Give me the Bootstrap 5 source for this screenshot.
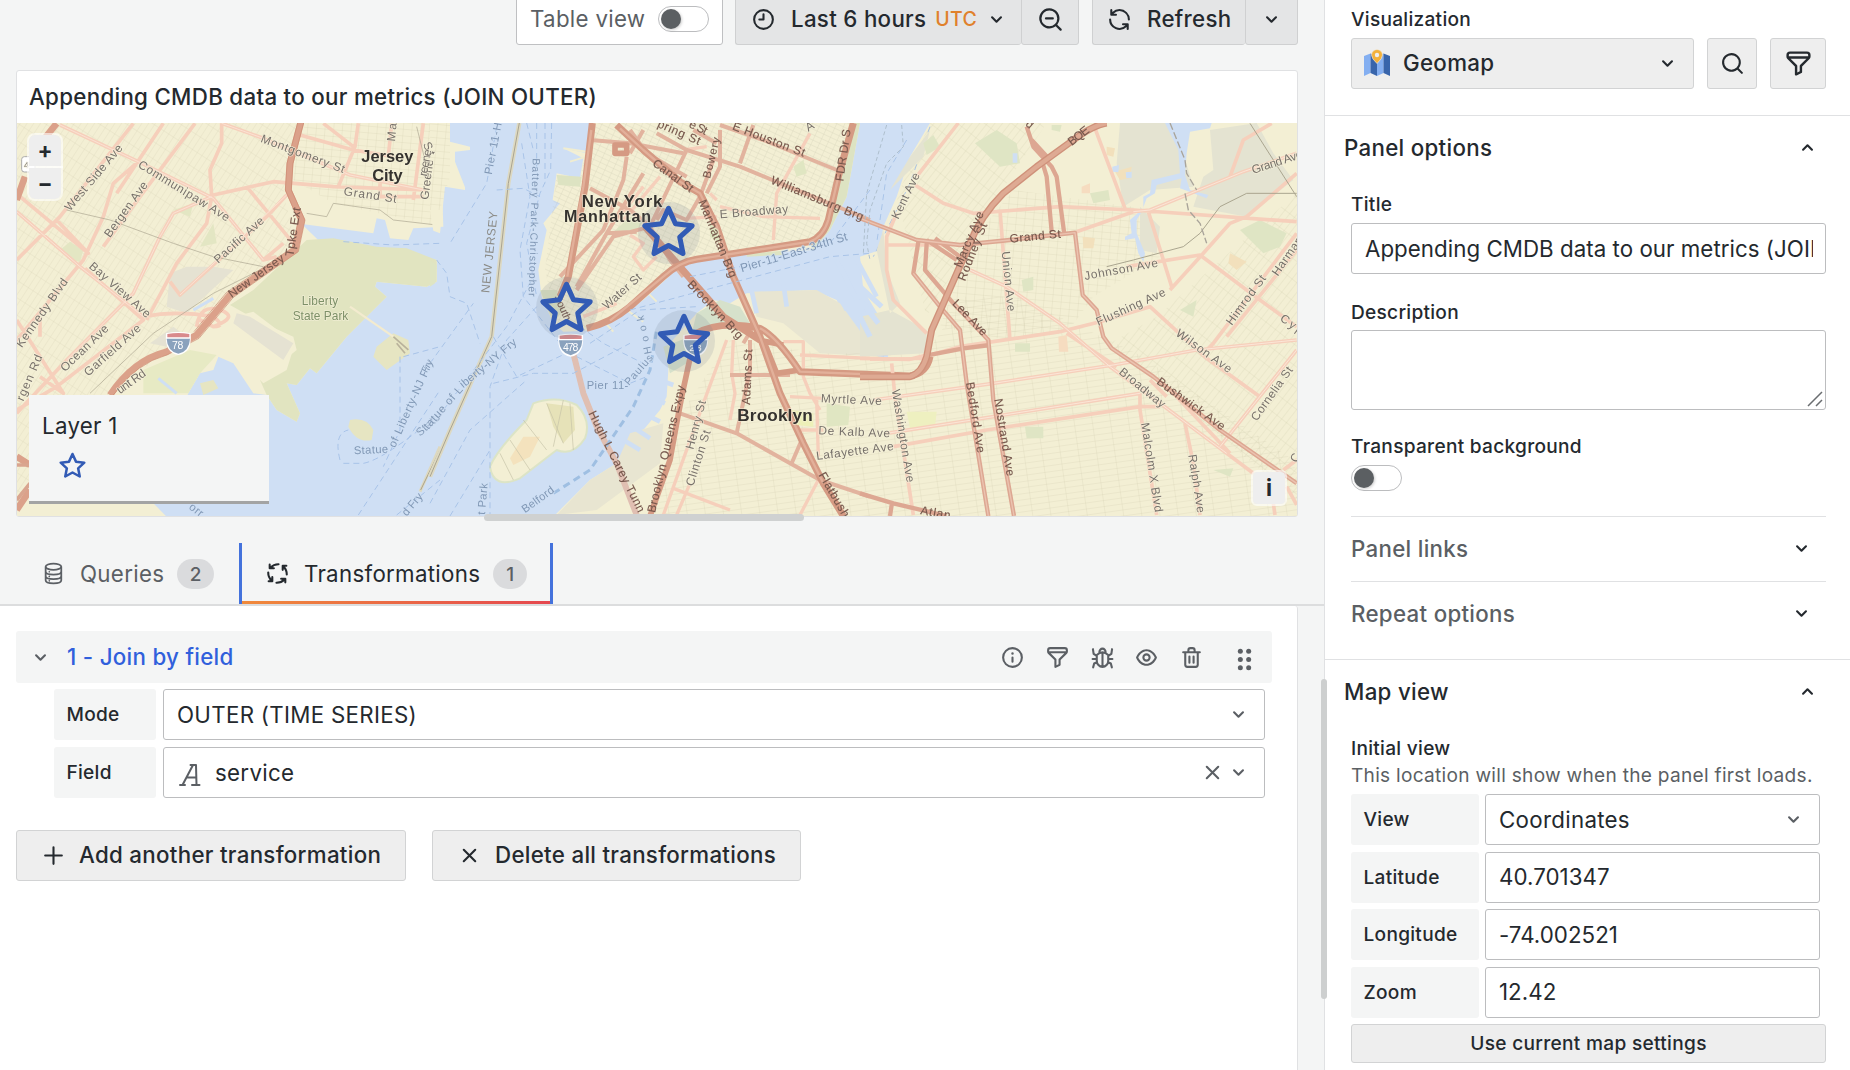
<!DOCTYPE html>
<html lang="en">
<head>
<meta charset="utf-8">
<meta name="viewport" content="width=device-width, initial-scale=1">
<title>Edit panel</title>
<link href="https://cdn.jsdelivr.net/npm/bootstrap@5.3.0/dist/css/bootstrap.min.css" rel="stylesheet">
<style>
:root{--ink:#24292e;--ink2:#5b5f64;--canvas:#f4f5f5;--line:#e0e1e3;--field:#bcbdbf}
body{font-family:Inter,"Liberation Sans",sans-serif;font-size:22.3px;letter-spacing:.3px;line-height:28px;color:var(--ink);background:var(--canvas);height:1070px;overflow:hidden}
.ico{width:25px;height:25px;fill:currentColor;flex:none}
.ln{fill:none;stroke:currentColor;stroke-width:2;stroke-linecap:round;stroke-linejoin:round}
.main-col{width:1324px}
.side-col{width:526px;background:#fff;border-left:1px solid var(--line)}
.top-tools{height:45px;padding-right:26px}
.tool{height:51px;padding-bottom:1px;background:#e4e5e6;border:1px solid #cfd0d1;border-radius:0 0 3px 3px;font-weight:500;white-space:nowrap}
.tool.plain{background:#fff;border-color:#bfc0c2;color:var(--ink2);font-weight:400}
.tog{width:51px;height:26px;border:1px solid var(--field);border-radius:13px;background:#fff;padding:2px}
.tog::before{content:"";display:block;width:20px;height:20px;border-radius:50%;background:#5b5f62;box-shadow:1px 1px 3px #0003}
.viz{width:1282px;height:447px;margin:25px 0 0 16px;background:#fff;border:1px solid var(--line);border-radius:3px}
.viz-title{height:52px;padding:0 12px 1px;font-weight:500}
.map-box{height:393px}
.map-box>svg.geo{display:block;width:1280px;height:393px}
.map-btn{width:32px;height:31px;background:#eee;outline:2px solid #fff9;font-weight:700;line-height:31px;letter-spacing:0}
.zoomers{left:12px;top:12px;gap:2px}
.zoomers .map-btn{line-height:29px}
.info-b{right:12px;bottom:12px;height:32px;border-radius:4px}
.legend{left:12px;top:272px;width:240px;height:109px;background:var(--canvas);border-bottom:3px solid #a3a4a4;padding:17px 13px}
.grip{left:484px;top:514px;width:320px;height:7px;border-radius:4px;background:#cfd1d1}
.tabs-row{height:63px;margin-top:26px;border-bottom:2px solid #dcddde}
.tab-i{color:var(--ink2);height:61px}
.tab-on{width:314px;color:var(--ink);border:solid #4472dc;border-width:0 3px;background:linear-gradient(90deg,#f08a3c,#e5484f) bottom/100% 3px no-repeat}
.cnt{background:#dadbdd;color:var(--ink2);border-radius:15px;height:30px;font-size:19px;font-weight:500;line-height:31px;text-align:center}
.work{background:#fff;width:1298px;height:464px;border-right:1px solid var(--line);padding:25px 25px 0 16px;border-radius:0 3px 0 0}
.step-h{height:52px;background:var(--canvas);border-radius:3px}
.step-h b{font-weight:500;color:#3060dc}
.tag{background:var(--canvas);border-radius:3px;height:51px;font-size:19.1px;letter-spacing:.28px;font-weight:500;padding:0 12.500px 1px;line-height:24px}
.fld{height:51px;border:1px solid var(--field);border-radius:3px;background:#fff;padding:0 13px}
.typed{letter-spacing:.04px}
.gbtn{height:51px;border:1px solid #d2d3d4;background:#eee;border-radius:3px;font-weight:500;color:var(--ink);padding-bottom:1px}
.lab{font-size:19.1px;font-weight:500;line-height:24.5px;letter-spacing:.28px;height:24px}
.pad{padding:0 24px 0 26px}
.sect{border-top:1px solid var(--line)}
.sect-h{height:65px;padding:0 30px 2px 19px;font-weight:500}
.sub-h{height:65px;border-top:1px solid var(--line);color:var(--ink2);font-weight:500;padding-right:12px;padding-bottom:1px}
.sub-h .ico{color:var(--ink)}
.rowg{margin-bottom:6.6px;padding-right:6px;gap:6px}
.scr{left:1321px;top:679px;width:6px;height:320px;border-radius:3px;background:#cdcfcf}
.geo text{font-family:"Liberation Sans",Arial,sans-serif;letter-spacing:0}
</style>
<script src="https://cdn.jsdelivr.net/npm/bootstrap@5.3.0/dist/js/bootstrap.bundle.min.js"></script>
</head>
<body class="d-flex position-relative">
<svg width="0" height="0" class="position-absolute">
<symbol id="down" viewBox="0 0 24 24"><path d="M17,9.17a1,1,0,0,0-1.41,0L12,12.71,8.46,9.17a1,1,0,0,0-1.41,0,1,1,0,0,0,0,1.42l4.24,4.24a1,1,0,0,0,1.42,0L17,10.59A1,1,0,0,0,17,9.17Z"/></symbol>
<symbol id="up" viewBox="0 0 24 24"><path d="M17,13.41,12.71,9.17a1,1,0,0,0-1.42,0L7.05,13.41a1,1,0,0,0,0,1.42,1,1,0,0,0,1.41,0L12,11.29l3.54,3.54a1,1,0,0,0,.7.29,1,1,0,0,0,.71-.29A1,1,0,0,0,17,13.41Z"/></symbol>
<symbol id="clock" viewBox="0 0 24 24"><path d="M12,2A10,10,0,1,0,22,12,10,10,0,0,0,12,2Zm0,18a8,8,0,1,1,8-8A8,8,0,0,1,12,20ZM12,6a1,1,0,0,0-1,1v4H8a1,1,0,0,0,0,2h4a1,1,0,0,0,1-1V7A1,1,0,0,0,12,6Z"/></symbol>
<symbol id="search" viewBox="0 0 24 24"><path d="M21.71,20.29,18,16.61A9,9,0,1,0,16.61,18l3.68,3.68a1,1,0,0,0,1.42,0A1,1,0,0,0,21.71,20.29ZM11,18a7,7,0,1,1,7-7A7,7,0,0,1,11,18Z"/></symbol>
<symbol id="minus" viewBox="0 0 24 24"><use href="#search"/><path d="M8,10h6a1,1,0,0,1,0,2H8a1,1,0,0,1,0-2Z"/></symbol>
<symbol id="sync" viewBox="0 0 24 24"><path d="M19.91,15.51H15.38a1,1,0,0,0,0,2h2.4A8,8,0,0,1,4,12a1,1,0,1,0-2,0,10,10,0,0,0,16.88,7.23V21a1,1,0,0,0,2,0V16.5A1,1,0,0,0,19.91,15.51ZM12,2A10,10,0,0,0,5.12,4.77V3a1,1,0,0,0-2,0V7.5a1,1,0,0,0,1,1h4.5a1,1,0,0,0,0-2H6.22A8,8,0,0,1,20,12a1,1,0,0,0,2,0A10,10,0,0,0,12,2Z"/></symbol>
<symbol id="filter" viewBox="0 0 24 24"><path d="M19,2H5A3,3,0,0,0,2,5V6.17a3,3,0,0,0,.25,1.2l0,.06a2.81,2.81,0,0,0,.59.86L9,14.41V21a1,1,0,0,0,.47.85A1,1,0,0,0,10,22a1,1,0,0,0,.45-.11l4-2A1,1,0,0,0,15,19V14.41l6.12-6.12a2.81,2.81,0,0,0,.59-.86l0-.06A3,3,0,0,0,22,6.17V5A3,3,0,0,0,19,2ZM13.29,13.29A1,1,0,0,0,13,14v4.38l-2,1V14a1,1,0,0,0-.29-.71L5.41,8H18.59ZM20,6H4V5A1,1,0,0,1,5,4H19a1,1,0,0,1,1,1Z"/></symbol>
<symbol id="info" viewBox="0 0 24 24"><path d="M12,2A10,10,0,1,0,22,12,10,10,0,0,0,12,2Zm0,18a8,8,0,1,1,8-8A8,8,0,0,1,12,20Zm0-9a1,1,0,0,0-1,1v4a1,1,0,0,0,2,0V12A1,1,0,0,0,12,11Zm0-4a1.2,1.2,0,1,0,0,2.4A1.2,1.2,0,0,0,12,7Z"/></symbol>
<symbol id="eye" viewBox="0 0 24 24"><path d="M21.92,11.6C19.9,6.91,16.1,4,12,4S4.1,6.91,2.08,11.6a1,1,0,0,0,0,.8C4.1,17.09,7.9,20,12,20s7.9-2.91,9.92-7.6A1,1,0,0,0,21.92,11.6ZM12,18c-3.17,0-6.17-2.29-7.9-6C5.83,8.29,8.83,6,12,6s6.17,2.29,7.9,6C18.17,15.71,15.17,18,12,18ZM12,8a4,4,0,1,0,4,4A4,4,0,0,0,12,8Zm0,6a2,2,0,1,1,2-2A2,2,0,0,1,12,14Z"/></symbol>
<symbol id="trash" viewBox="0 0 24 24"><path d="M10,18a1,1,0,0,0,1-1V11a1,1,0,0,0-2,0v6A1,1,0,0,0,10,18ZM20,6H16V5a3,3,0,0,0-3-3H11A3,3,0,0,0,8,5V6H4A1,1,0,0,0,4,8H5V19a3,3,0,0,0,3,3h8a3,3,0,0,0,3-3V8h1a1,1,0,0,0,0-2ZM10,5a1,1,0,0,1,1-1h2a1,1,0,0,1,1,1V6H10Zm7,14a1,1,0,0,1-1,1H8a1,1,0,0,1-1-1V8H17Zm-3-1a1,1,0,0,0,1-1V11a1,1,0,0,0-2,0v6A1,1,0,0,0,14,18Z"/></symbol>
<symbol id="bug" viewBox="0 0 24 24"><g class="ln" stroke-width="1.8"><path d="M6.5 9.5Q12 4.500 17.500 9.500V15a5.500 6 0 0 1-11 0ZM12 7.500V21M9 7a3 3.500 0 0 1 6 0M6.500 10.500 3.500 8.500 2.800 4M17.500 10.500 20.500 8.500 21.200 4M6.500 13.500H2.500M17.500 13.500H21.500M6.700 16.500 4 17.800 3 21.500M17.300 16.500 20 17.800 21 21.500"/></g></symbol>
<symbol id="dots" viewBox="0 0 24 24"><circle cx="8" cy="4" r="2.400"/><circle cx="16" cy="4" r="2.400"/><circle cx="8" cy="12" r="2.400"/><circle cx="16" cy="12" r="2.400"/><circle cx="8" cy="20" r="2.400"/><circle cx="16" cy="20" r="2.400"/></symbol>
<symbol id="db" viewBox="0 0 24 24"><g fill="none" stroke="currentColor" stroke-width="1.700"><ellipse cx="11" cy="5.500" rx="7.500" ry="3"/><path d="M3.500 5.500V18.500c0 4 15 4 15 0V5.500M3.500 10c0 4 15 4 15 0M3.500 14.500c0 4 15 4 15 0"/></g><circle cx="7" cy="10.300" r=".8"/><circle cx="7" cy="14.800" r=".8"/><circle cx="7" cy="19" r=".8"/></symbol>
<symbol id="process" viewBox="0 0 24 24"><g class="ln" stroke-width="2.200"><path d="M4.500 3.500V7H8.500M5 6.500Q8.500 3 13 3.100M20.500 4.500H17V8.500M17.500 5Q21 8.500 20.900 13M19.500 20.500V17H15.500M19 17.500Q15.500 21 11 20.900M3.500 19.500H7V15.500M6.500 19Q3 15.500 3.100 11"/></g></symbol>
<symbol id="xx" viewBox="0 0 24 24"><path class="ln" d="M6.500 6.500 17.500 17.500M17.500 6.500 6.500 17.500"/></symbol>
<symbol id="plus" viewBox="0 0 24 24"><path class="ln" d="M12 4V20M4 12H20"/></symbol>
<symbol id="fieldA" viewBox="0 0 22 24"><path class="ln" d="M1 22H6M13 22H20.500M3.500 22 14 2H17L17.500 22M11.500 2H17M8 14.500H17.200" stroke-width="1.700"/></symbol>
<symbol id="star" viewBox="-27 -27 54 54"><path d="M0-21.500 6.500-7.200 22-5.300 10.500 5.300 13.500 20.500 0 13-13.500 20.500-10.500 5.300-22-5.300-6.500-7.200Z" fill="none" stroke="#325bb5" stroke-width="4.700" stroke-linejoin="round"/></symbol>
</svg>

<main class="main-col">
  <div class="top-tools d-flex justify-content-end align-items-end">
    <div class="tool plain d-flex align-items-center ps-3 pe-3" style="width:207px;margin-right:12px"><span style="margin-left:-3px;margin-right:auto">Table view</span><span class="tog" style="margin-right:-3px"></span></div>
    <div class="tool d-flex align-items-center" style="width:286px;padding-left:15px;border-right:0"><svg class="ico"><use href="#clock"/></svg><span style="margin-left:15px">Last 6 hours</span><span style="color:#e0812c;font-size:19.500px;margin-left:9px">UTC</span><svg class="ico" style="margin-left:7px"><use href="#down"/></svg></div>
    <div class="tool d-flex align-items-center justify-content-center" style="width:58px;margin-right:13px"><svg class="ico" style="width:27px;height:27px"><use href="#minus"/></svg></div>
    <div class="tool d-flex align-items-center" style="width:153px;padding-left:14px;border-right:0"><svg class="ico"><use href="#sync"/></svg><span style="margin-left:15px">Refresh</span></div>
    <div class="tool d-flex align-items-center justify-content-center" style="width:53px"><svg class="ico"><use href="#down"/></svg></div>
  </div>

  <section class="viz">
    <div class="viz-title d-flex align-items-center">Appending CMDB data to our metrics (JOIN OUTER)</div>
    <div class="map-box position-relative overflow-hidden">
      <svg class="geo" viewBox="17 123 1280 393">
        <defs>
          <pattern id="gA" width="44" height="17" patternUnits="userSpaceOnUse" patternTransform="rotate(-57)"><path d="M0 0H44M0 0V17" stroke="#b9b597" stroke-width="1.300" opacity=".6"/></pattern>
          <pattern id="gB" width="26" height="20" patternUnits="userSpaceOnUse" patternTransform="rotate(5)"><path d="M0 0H26M0 0V20" stroke="#b9b597" stroke-width="1.300" opacity=".7"/></pattern>
          <pattern id="gC" width="22" height="15" patternUnits="userSpaceOnUse" patternTransform="rotate(25)"><path d="M0 0H22M0 0V15" stroke="#aaa88f" stroke-width="1.300" opacity=".6"/></pattern>
          <pattern id="gD" width="54" height="18" patternUnits="userSpaceOnUse" patternTransform="rotate(-8)"><path d="M0 0H54M0 0V18" stroke="#b3b08f" stroke-width="1.300" opacity=".65"/></pattern>
          <pattern id="gE" width="18" height="50" patternUnits="userSpaceOnUse" patternTransform="rotate(38)"><path d="M0 0H18M0 0V50" stroke="#b3b08f" stroke-width="1.300" opacity=".6"/></pattern>
          <g id="i-shield"><path d="M-37-25Q0-33 37-25Q42 34 0 40Q-42 34-37-25Z" fill="#fff"/><path d="M-33-23Q0-29 33-23V-13H-33Z" fill="#d98a8c"/><path d="M-35-9H35Q33 29 0 36Q-33 29-35-9Z" fill="#8aa2bd"/></g>
          <filter id="soft" x="-2%" y="-2%" width="104%" height="104%"><feGaussianBlur stdDeviation=".45"/></filter>
        </defs>
        <g filter="url(#soft)" stroke-linejoin="round">
        <rect width="1320" height="540" fill="#cfdff4"/>
        <!-- New Jersey side -->
        <g transform="translate(0 60) scale(.33333)" fill="none">
          <path fill="#f3efd4" d="M0 180H1322V240L1330 500 1240 505 1225 540 1170 535 1155 480 1130 475 1120 520 905 492 960 545 1120 568 1220 580 1310 600 1310 665 1280 680 1130 665 1125 680 1160 710 1040 830 950 940 930 925 890 975 860 970 900 1060 890 1085 830 1050 800 1005 760 1000 700 910 655 890 640 930 600 940 565 1000 500 1150 460 1330 500 1370H0Z"/>
          <path fill="url(#gA)" d="M0 180H900L850 400 890 560 690 700 520 860 330 1000 0 1400Z"/>
          <path fill="url(#gB)" d="M900 180H1320V500L1000 430 880 360Z"/>
          <path fill="#e1e4c0" d="M690 735 760 690 920 540 1000 535 1130 560 1220 565 1310 600 1310 665 1280 680 1130 665 1125 680 1160 710 1040 830 950 940 930 925 890 975 860 970 900 1060 890 1085 830 1050 800 1005 780 960 890 870 880 830 770 780Z"/>
          <path fill="#e7eac4" d="M430 930 570 870 650 885 600 940 565 1000H430Z"/>
          <path fill="#f3efd4" d="M700 770 760 755 885 850 860 930 790 970 690 870Z"/>
          <path fill="#e5e2d2" d="M510 640 560 620 640 620 700 630 560 760 500 740ZM450 850 520 800 560 830 500 860ZM710 760 750 770 880 850 850 900 700 790Z"/>
          <path fill="#e3e6c3" d="M640 490 600 560 650 550ZM180 570 210 545 250 570 240 605 210 600ZM520 450 580 430 570 470Z"/>
          <path fill="#e6e5c2" d="M1130 860 1180 820 1225 840 1230 880 1160 930 1120 890ZM1050 1080Q1100 1070 1120 1110L1115 1140Q1070 1150 1045 1100ZM600 970 640 960 655 985 610 1005Z"/>
          <path stroke="#cfdff4" stroke-width="9" d="M580 750 640 715M475 955 530 1000"/>
          <path stroke="#b9b29b" stroke-width="5" d="M1180 830 1225 870M1190 850 1215 880"/>
          <path stroke="#f6cfbb" stroke-width="11" d="M180 195 415 305 640 415 790 600M415 305 340 370 310 470 250 600 0 900M490 190 350 400M400 190 180 470 50 600M585 190 420 410 310 560M665 190V250L630 330 635 410 520 460 480 530 400 700 200 900 50 1060M635 410 620 490 530 610 440 780M510 665 540 705 800 470 860 405M640 405 820 365 1000 380 1280 390M740 380 880 550M60 410 265 580 170 480M50 455 240 620 430 770Q530 750 640 770Q680 800 640 800M255 625 430 780 170 980 50 1050M120 830V770M50 780 190 1000 120 950M665 190 790 235 1050 345 1270 390M970 190 1060 260M1075 190 1065 260 1015 380M1175 190 1165 290M1270 190 1240 420M900 225 1060 270 1180 290M850 550 790 600 830 590M1140 370V410H1270M590 800Q600 730 660 750T640 800L600 780"/>
          <path stroke="#fbe2d3" stroke-width="3" d="M180 195 415 305 640 415 790 600M50 455 240 620 430 770M635 410 520 460 480 530 400 700 200 900M665 190 790 235 1050 345 1270 390M860 405 540 705"/>
          <path stroke="#aaa58f" stroke-width="2" d="M200 450 330 480 520 550 640 590 790 620M800 620 640 700 460 820 270 1000M920 460 980 470 1000 430 1140 450 1180 480 1310 495M1250 200 1320 480"/>
          <path stroke="#dba18a" stroke-width="20" d="M170 190 130 240M75 350 50 420M903 185 870 310 865 390 905 480 885 570 690 705 590 825 500 875Q400 900 330 1005M50 1190 90 1215M90 1290 50 1350"/>
          <path stroke="#cb8870" stroke-width="2" d="M912 185 879 310 874 390 915 480 895 575 700 712 597 835 503 884Q407 910 340 1005M894 185 861 310 856 390 895 480 877 563 680 697 582 815"/>
          <path stroke="#d9a58f" stroke-width="11" d="M50 1215H90M50 1320 90 1270"/>
          <path stroke="#f3ebcf" stroke-width="7" d="M1050 740 1180 830"/>
          <path stroke="#a8c3e8" stroke-width="3" stroke-dasharray="18 12" d="M1030 545 1180 555 1320 550M1200 890V1110L1150 1220M1210 890 1320 860M1020 1200Q1000 1120 1045 1110M1030 1210H1090Q1150 1200 1320 1060M1075 1365 1320 990M1190 1365 1320 1260"/>
          <path stroke="#ded9bf" stroke-width="9" d="M1320 1160 1260 1295"/><path stroke="#a9a28e" stroke-width="3" d="M1320 1170 1262 1290"/>
          <rect x="65" y="290" width="40" height="46" rx="8" fill="#fff" stroke="#aaa" stroke-width="3"/>
          <use href="#i-shield" transform="translate(535 845)"/>
        </g>
        <!-- Manhattan and downtown Brooklyn -->
        <g transform="translate(430 110) scale(.33333)" fill="none">
          <path fill="#f3efd4" d="M0 39H60V95L120 110V120L75 125V155L105 232V240L45 230 30 370 10 362 0 300Z"/>
          <path fill="url(#gB)" d="M0 39H60V200L30 300H0Z"/>
          <path fill="#dfe5c3" d="M0 450 20 465 15 520 0 530Z"/>
          <path fill="#f3efd4" d="M485 39 470 130 400 115 460 145 450 205 380 190 368 270 390 280 340 340 350 360 325 480 335 560 370 640 400 665 470 662 540 640 640 570 700 515 760 460 960 432 1150 420 1200 360 1250 260 1290 39Z"/>
          <path fill="url(#gC)" d="M485 39 450 205 380 195 345 480 380 640 470 655 760 450 1150 400 1270 60V39Z"/>
          <path fill="#dde3c2" d="M380 195 455 200 450 230 385 225ZM1215 210 1245 150 1275 39 1290 39 1250 260 1200 360 1150 420 1140 400 1190 340ZM330 540 370 640 400 600 380 540ZM600 320 640 330 620 370 540 375ZM950 432 1060 422V435L950 440Z"/>
          <path fill="#f3efd4" d="M370 1220 480 1110 560 1060 600 1040 640 960 690 900 710 860 720 700 800 610 850 570 900 580 950 550 1150 540 1220 570 1300 730 1375 745 1360 640 1300 540 1290 440 1350 420 1360 350 1400 260 1440 140 1500 39H2620V1220Z"/>
          <path fill="#e8e5d1" d="M960 545 1160 540 1230 580 1310 690 1330 738 1170 730 1060 640 980 620ZM600 970 700 940 690 1060 500 1200 380 1215 480 1110 560 1060Z"/>
          <path fill="#d6e1cb" d="M800 610 870 570 930 590 960 640 830 650 780 690ZM700 710 780 680 770 760 720 790Z"/>
          <path fill="url(#gD)" d="M900 690 1180 730H1490L1600 560 1760 560 2120 730 2590 1050 2620 1220H650L760 900Z"/>
          <path stroke="#cfdff4" stroke-width="14" d="M660 800 730 825M640 850 705 880M620 900 690 935M600 945 660 985M580 990 630 1020M1190 480 1250 600M1220 450 1300 610M1270 430 1340 560M960 520 980 610M1060 520 1070 590"/>
          <path stroke="#f0edd1" stroke-width="6" d="M500 610 550 665M590 600 640 635M650 545 680 575M400 115 470 125M420 155 470 140"/>
          <path fill="#f3efd4" stroke="#dce4c6" stroke-width="6" d="M310 880Q380 855 440 885 485 930 465 985 430 1040 380 1020L270 1105Q190 1140 180 1070 200 1020 290 930Z"/>
          <path fill="#e6e2b8" d="M350 880 430 890 435 960 400 1000 370 950Z"/><path fill="#f4e2bd" d="M280 980 330 980 300 1040 250 1065 240 1045Z"/>
          <path stroke="#c5c2a8" stroke-width="2" d="M350 880 400 1000M420 880 430 1020M280 930 350 1020M240 990 300 1080M210 1030 250 1110M400 870 370 1010"/>
          <path stroke="#f6cfbb" stroke-width="10" d="M600 375 640 400 610 440 640 480 680 440M460 620 560 580M640 230 560 330M690 200 580 330M1140 70 1040 250 1030 390M870 290 1000 320 1170 325M890 690 820 880 700 1215M910 690 905 790 915 850 900 930M1060 695H1120V800L1140 850 1170 900M1110 735 1320 745M1080 860 1180 865M1110 960H1180M1160 870 1165 1040M770 325 860 320M730 1135 900 1200M780 1120 740 1215M1170 1100 1110 1215M1500 745 1320 748M760 120 830 110M860 270 840 250"/>
          <path stroke="#e2b39e" stroke-width="12" d="M440 530 530 370 640 190M390 500 520 360 580 210 590 140M480 90 600 100 760 130M600 60 650 130 770 200M640 60 600 130M480 235 600 300 650 340M440 540 550 380 660 350 770 120M680 330 700 300 770 330 810 260 850 150M530 370 620 365M830 250 870 170 870 60M970 45 930 160M680 70 770 120 930 170 1100 240 1320 330M870 45 1000 90 1220 180M790 60 860 100M920 970 960 780V690M750 910 920 970 1170 1110 1320 1160M1085 1060 1115 990M900 795H1080M660 350 720 450 760 500M970 650 940 700"/>
          <path stroke="#e0bfb2" stroke-width="18" d="M420 690 460 850 500 950 560 1060 620 1215"/>
          <path stroke="#d59a83" stroke-width="21" d="M487 39 465 230 415 500 390 560M560 45 640 120 750 215 810 250 860 350 910 500 990 680 1050 850 1120 1000 1180 1120 1240 1218M470 655Q540 640 600 590L700 500Q750 455 800 448L1140 395Q1180 380 1195 330L1225 200 1270 39M645 350 880 620 990 690M800 670Q870 630 990 655 1040 680 1110 785L1440 798Q1490 790 1500 740"/>
          <path stroke="#d59a83" stroke-width="17" d="M780 745 755 860 740 940 720 1050 660 1218M985 690 1060 705M1000 690 1040 790 1110 780M555 105H590V130H555Z"/>
          <path stroke="#e2b09a" stroke-width="7" d="M484 60 460 230 412 500M570 55 640 120 750 215 810 250 860 350 910 500 990 680 1050 850 1120 1000 1180 1120M540 632 700 500Q750 455 800 448L1140 395Q1180 380 1195 330L1225 200M990 655Q1040 680 1110 785L1440 798"/>
          <path stroke="#ddd9c2" stroke-width="13" d="M268 39 235 220 185 680 140 780 60 960 0 1100"/><path stroke="#aaa48f" stroke-width="3" d="M268 39 235 220 185 680 140 780 60 960 0 1100"/>
          <path stroke="#a9c4e8" stroke-width="3" stroke-dasharray="18 12" d="M365 39 362 180 330 250 290 400 320 560M345 39V220M320 39V190M290 39 310 120M275 100 300 260 270 420 280 560 390 700M200 50 170 220 60 400M20 450 50 490 60 560 110 580 150 700M200 240 280 235 330 260M40 900 230 650 310 500M190 680 260 800 430 720M190 820 310 790 430 790 600 700M320 590 230 690 180 830V1218M440 740 600 820 650 800M480 700 630 600 800 590M600 600 900 520 1200 440 1320 430M780 500 930 470M1320 240 1200 400M0 1180 120 960 290 810M450 650 520 700 640 760M1500 50 1440 220 1330 440M1430 90 1370 190 1340 400M60 1218 180 1020M0 760 130 580"/>
          <path stroke="#9fbfe2" stroke-width="9" stroke-dasharray="22 14" d="M370 1150 480 1080 610 890 660 780 680 660"/>
          <path fill="#edf0b8" d="M1085 900 1150 910 1150 950 1100 945Z"/><path fill="#e0e6c2" d="M1190 880 1260 890 1255 945 1190 950ZM1090 170 1120 150 1130 190 1100 200ZM840 340 865 360 870 400 840 380Z"/>
        </g>
        <!-- Williamsburg and Bushwick -->
        <g transform="translate(860 110) scale(.33333)" fill="none">
          <path fill="url(#gE)" d="M890 620 1320 240V1180L750 700ZM210 39 110 260 200 620 420 250 560 39Z"/>
          <path fill="url(#gB)" d="M460 240 820 290 900 440 700 560 620 670 440 690 240 650 330 400Z"/>
          <path fill="#e4e3d1" d="M780 39H930L970 130 1000 230 870 240 790 290 770 160ZM1050 60 1190 39 1240 130 1300 210 1160 320 1000 290 1030 200 1060 180ZM840 290 900 350 890 430 840 420ZM90 240 150 140 210 60 190 140ZM0 620 90 600 200 660V730L0 740ZM70 360 50 420 90 610 120 580 80 480Z"/>
          <path fill="#dfe5c4" d="M345 100 410 60 470 100 480 160 420 170ZM190 100 220 75 240 110 200 135ZM690 250 745 240 750 270 700 280ZM1140 360 1200 330 1280 370 1260 410 1210 430ZM960 600 1010 570 1000 620ZM495 950H550V985H500ZM465 700H510V725H465ZM1060 1080 1120 1075 1110 1100ZM485 510 520 500 520 540 490 545ZM575 45 605 45 600 65 575 60Z"/>
          <path fill="#eef0c0" d="M140 905 230 905 225 950 150 955Z"/><path fill="#f2e0bc" d="M740 110 765 115 760 140 740 135ZM668 380 705 385 700 415 670 415ZM1110 430 1160 455 1130 480 1105 460ZM765 185 815 170 810 205 780 210Z"/><path fill="#f6dcc0" d="M595 680 620 675 625 725 597 725ZM665 230 690 220 690 250 665 250Z"/>
          <path fill="#cfdff4" d="M915 39H1055L1050 55 990 65 980 130 975 195 990 240 1045 255 1040 265 960 235 965 205 890 225 885 250 860 265 845 305 830 330V370L855 430 850 455 835 430 825 385 795 390 795 380 815 370 810 330 850 295 850 260 870 250 875 210 960 190 955 120ZM458 130H472V158H458ZM757 170 777 165 775 187 757 185ZM797 187 815 185 815 203 799 205Z"/>
          <path stroke="#cfdff4" stroke-width="16" d="M0 570 55 640M0 620 30 680M0 530 65 590"/>
          <path stroke="#f6cfbb" stroke-width="11" d="M295 39 170 200M110 310 80 380V480L100 570 200 670M165 225 250 280 340 310 600 290 820 300 1310 335M420 300 450 690M650 365 820 305 870 300 1150 185 1310 130M705 55 795 295M865 305 935 530M1235 40 1150 90 1110 200M1310 190 1230 260 1160 320 1110 340 1030 430 930 540M800 470 1020 435 1200 570 1310 650M0 745 150 748 200 735M210 735 300 710 600 665 720 635 870 590 1040 745 1200 860M330 480 440 530 600 640 750 770 900 880 1100 1030 1180 1090M620 670 770 770M40 870 400 820 760 765 1010 720 1310 690M80 970 400 920 840 850M100 1010 380 960 840 890 900 890M840 850 840 900 890 1215M975 940 1000 1060 1020 1215M1080 1010 1310 720M1310 370 1060 700 1040 720M1310 420 1100 680M940 850 1110 1030M75 405 250 405M95 760 105 860 160 1215M1240 1180 1245 1215M1270 1080 1310 1050M1280 1130 1310 1185M870 810 920 860"/>
          <path stroke="#fbe6d7" stroke-width="3" d="M40 870 400 820 760 765 1010 720 1310 690M80 970 400 920 840 850M330 480 440 530 600 640 750 770 900 880 1100 1030M820 305 870 300 1150 185 1310 130M1080 1010 1310 720"/>
          <path stroke="#aaa58f" stroke-width="3" d="M740 470 820 450 970 410 1020 370 1080 290 1160 250 1310 250M1170 40 1310 260"/><path stroke="#a9a49a" stroke-width="4" stroke-dasharray="22 8" d="M930 39 975 150 980 190 1010 240M975 250 985 300 1020 340 1040 400"/>
          <path stroke="#dda792" stroke-width="13" d="M0 325 170 390 300 405 450 390 645 368 668 555 710 600 730 680 755 715 880 800 1080 960 1310 1120M500 50 520 110 575 170 590 200 612 365M545 150 560 200 575 365M175 395 160 490 240 590 300 660 320 820 385 1218M200 400 195 480 280 580 385 690 400 870 462 1218M210 735 310 715 390 705M200 390 290 450M225 385 300 440M0 1150 100 1180 260 1218M95 1185 90 1218M515 90 570 150"/>
          <path stroke="#ebc3b0" stroke-width="4" d="M0 325 170 390 300 405 450 390 645 368 668 555 710 600 730 680 755 715 880 800 1080 960 1310 1120M160 490 240 590 300 660 320 820 385 1218M280 580 385 690 400 870 462 1218"/>
          <path stroke="#cf917a" stroke-width="21" d="M740 39Q700 45 640 90L530 170 430 250Q360 320 330 400L215 660 200 740Q185 790 150 800H0"/><path stroke="#deaa93" stroke-width="13" d="M740 39Q700 45 640 90L530 170 430 250Q360 320 330 400L215 660 200 740Q185 790 150 800H0"/>
          <path stroke="#aebfcd" stroke-width="3" stroke-dasharray="12 8" d="M80 45 20 250 10 430M125 45 130 110 80 160 30 300 20 400 30 450"/>
        </g>
        <g transform="translate(430 110) scale(.33333)"><use href="#i-shield" transform="translate(422 700)"/><use href="#i-shield" transform="translate(797 700)"/></g>
        <g id="labels"></g>
        </g>
        <g fill="#6f7f8c" fill-opacity=".16"><circle cx="567" cy="308" r="31"/><circle cx="669" cy="233" r="31"/><circle cx="684" cy="341" r="31"/></g>
        <use href="#star" x="537.500" y="278.500" width="58" height="58"/><use href="#star" x="639.500" y="202.500" width="58" height="58"/><use href="#star" x="655" y="310.500" width="58" height="58"/>
      </svg>
      <div class="zoomers position-absolute d-flex flex-column text-center"><div class="map-btn rounded-top">+</div><div class="map-btn rounded-bottom">−</div></div>
      <div class="legend position-absolute"><div>Layer 1</div><svg style="width:29px;height:29px;margin:11px 0 0 16px;display:block" viewBox="-27 -27 54 54"><use href="#star" x="-27" y="-27" width="54" height="54"/></svg></div>
      <div class="map-btn info-b position-absolute text-center">i</div>
    </div>
  </section>
  <div class="grip position-absolute"></div>

  <nav class="tabs-row d-flex">
    <div class="tab-i d-flex align-items-center" style="width:239px;padding-left:42px"><svg class="ico"><use href="#db"/></svg><span style="margin-left:13px">Queries</span><span class="cnt" style="width:37px;margin-left:13px">2</span></div>
    <div class="tab-i tab-on d-flex align-items-center" style="padding-left:23px"><svg class="ico"><use href="#process"/></svg><span style="margin-left:14px">Transformations</span><span class="cnt" style="width:34px;margin-left:13px">1</span></div>
  </nav>
  <section class="work">
    <div class="step-h d-flex align-items-center" style="padding:0 15px 0 12px;color:var(--ink2)"><svg class="ico"><use href="#down"/></svg><b style="margin-left:14px" class="me-auto">1 - Join by field</b>
      <div class="d-flex align-items-center" style="gap:19.800px"><svg class="ico"><use href="#info"/></svg><svg class="ico"><use href="#filter"/></svg><svg class="ico"><use href="#bug"/></svg><svg class="ico"><use href="#eye"/></svg><svg class="ico"><use href="#trash"/></svg><svg class="ico" style="margin:5px 0 0 8px"><use href="#dots"/></svg></div></div>
    <div class="d-flex" style="margin:6px 7px 0 38px;gap:7px"><div class="tag d-flex align-items-center" style="width:102px">Mode</div><div class="fld flex-grow-1 d-flex align-items-center"><span class="me-auto">OUTER (TIME SERIES)</span><svg class="ico" style="color:var(--ink2)"><use href="#down"/></svg></div></div>
    <div class="d-flex" style="margin:7px 7px 0 38px;gap:7px"><div class="tag d-flex align-items-center" style="width:102px">Field</div><div class="fld flex-grow-1 d-flex align-items-center"><svg style="width:22px;height:24px;margin:4px 0 0 2px;color:var(--ink2)"><use href="#fieldA"/></svg><span class="me-auto" style="margin-left:14px">service</span><svg class="ico" style="color:var(--ink2)"><use href="#xx"/></svg><svg class="ico" style="margin-left:1px;color:var(--ink2)"><use href="#down"/></svg></div></div>
    <div class="d-flex" style="margin-top:32px;gap:26px"><div class="gbtn d-flex align-items-center" style="width:390px;padding-left:24px"><svg class="ico"><use href="#plus"/></svg><span style="margin-left:13px">Add another transformation</span></div><div class="gbtn d-flex align-items-center" style="width:369px;padding-left:24px"><svg class="ico"><use href="#xx"/></svg><span style="margin-left:13px">Delete all transformations</span></div></div>
  </section>
</main>

<aside class="side-col">
  <div class="pad" style="padding-top:7px;height:115px">
    <div class="lab" style="margin-bottom:7px">Visualization</div>
    <div class="d-flex" style="gap:13px">
      <div class="gbtn d-flex align-items-center flex-grow-1" style="padding:0 13px 1px 11px"><svg width="28" height="28" viewBox="0 0 28 28"><path fill="#84aff1" d="M1 7 7.500 4.500V24L1 27ZM14 7 20.500 4.500V24L14 27Z"/><path fill="#3865ab" d="M7.500 4.500 14 7V27L7.500 24ZM20.500 4.500 27 7V27L20.500 24Z"/><path fill="#f3b13a" stroke="#eee" stroke-width=".6" d="M14 14.500Q8.500 9.500 8.500 6A5.500 5.500 0 0 1 19.500 6Q19.500 9.500 14 14.500Z"/><circle cx="14" cy="6" r="2.200" fill="#eee"/></svg><span class="me-auto" style="margin-left:12px">Geomap</span><svg class="ico"><use href="#down"/></svg></div>
      <div class="gbtn d-flex align-items-center justify-content-center" style="width:50px"><svg class="ico"><use href="#search"/></svg></div>
      <div class="gbtn d-flex align-items-center justify-content-center" style="width:56px"><svg class="ico" style="width:29px;height:29px"><use href="#filter"/></svg></div>
    </div>
  </div>
  <div class="sect">
    <div class="sect-h d-flex align-items-center justify-content-between">Panel options<svg class="ico"><use href="#up"/></svg></div>
    <div class="pad" style="padding-top:11px">
      <div class="lab">Title</div>
      <div class="fld typed d-flex align-items-center overflow-hidden" style="margin-top:7px;padding-right:12px"><div class="overflow-hidden text-nowrap">Appending CMDB data to our metrics (JOIN OUTER)</div></div>
      <div class="lab" style="margin-top:26px">Description</div>
      <div class="fld d-flex align-items-end justify-content-end" style="margin-top:6px;height:80px;padding:2px"><svg width="16" height="16" stroke="#6a6d70" stroke-width="1.500"><path d="M1 15 15 1M9 15 15 9"/></svg></div>
      <div class="lab" style="margin-top:24px">Transparent background</div>
      <div class="tog" style="margin-top:7px"></div>
      <div class="sub-h d-flex align-items-center justify-content-between" style="margin-top:25px">Panel links<svg class="ico"><use href="#down"/></svg></div>
      <div class="sub-h d-flex align-items-center justify-content-between">Repeat options<svg class="ico"><use href="#down"/></svg></div>
    </div>
  </div>
  <div class="sect" style="margin-top:13px">
    <div class="sect-h d-flex align-items-center justify-content-between">Map view<svg class="ico"><use href="#up"/></svg></div>
    <div class="pad" style="padding-top:11px">
      <div class="lab">Initial view</div>
      <div class="lab text-nowrap" style="font-weight:400;color:var(--ink2);margin:3px 0 7px">This location will show when the panel first loads.</div>
      <div class="rowg d-flex"><div class="tag d-flex align-items-center" style="width:128px">View</div><div class="fld flex-grow-1 d-flex align-items-center justify-content-between">Coordinates<svg class="ico" style="color:var(--ink2)"><use href="#down"/></svg></div></div>
      <div class="rowg d-flex"><div class="tag d-flex align-items-center" style="width:128px">Latitude</div><div class="fld typed flex-grow-1 d-flex align-items-center">40.701347</div></div>
      <div class="rowg d-flex"><div class="tag d-flex align-items-center" style="width:128px">Longitude</div><div class="fld typed flex-grow-1 d-flex align-items-center">-74.002521</div></div>
      <div class="rowg d-flex"><div class="tag d-flex align-items-center" style="width:128px">Zoom</div><div class="fld typed flex-grow-1 d-flex align-items-center">12.42</div></div>
      <div class="gbtn text-center" style="height:39px;font-size:19.100px;line-height:37px">Use current map settings</div>
    </div>
  </div>
</aside>
<div class="scr position-absolute"></div>
<script>
// Map labels per tile: [start x, start y, end x, end y, text, size, style]
const tiles = [
 {o:[0,60], l:[
  [210,455,370,265,'West Side Ave'],[330,535,445,375,'Bergen Ave'],[412,320,680,485,'Communipaw Ave'],[780,245,1030,340,'Montgomery St'],[1030,405,1188,428,'Grand St'],
  [1084,307,1240,307,'Jersey',44,'c'],[1117,363,1208,363,'City',44,'c'],[655,612,795,485,'Pacific Ave'],[265,622,440,775,'Bay View Ave'],[65,865,205,665,'Kennedy Blvd'],
  [195,937,328,808,'Ocean Ave'],[265,950,425,808,'Garfield Ave'],[70,1025,128,890,'rgen Rd'],[360,1003,440,945,'unt Rd'],[695,715,855,600,'New Jersey',32,'h'],[880,590,902,445,'Tpke Ext',32,'h'],
  [905,734,1015,734,'Liberty',32,'p'],[878,780,1045,780,'State Park',32,'p'],[1185,245,1190,190,'Ma'],[1285,420,1300,300,'Greene'],[1268,252,1285,290,'St'],
  [1062,1183,1165,1178,'Statue',30,'w'],[1185,1165,1300,905,'of Liberty-NJ Fry',30,'w'],[1260,1130,1322,1075,'Statu',30,'w'],[1220,1370,1270,1310,'d Fry',30,'w'],[565,1345,600,1372,'orr',30,'w'],
  [516,868,550,868,'78',28,'s'],[72,325,90,325,'4',24]]},
 {o:[430,110], l:[
  [455,290,697,290,'New York',45,'c'],[402,335,663,335,'Manhattan',43,'c'],[922,932,1148,932,'Brooklyn',46,'c'],[665,165,780,248,'Canal St',32,'h'],[805,275,900,505,'Manhattan Brg',32,'h'],
  [840,207,870,85,'Bowery',30,'h'],[905,58,1120,140,'E Houston St',32,'h'],[680,50,805,105,'pring St',32,'h'],[775,50,825,75,'e St',32,'h'],[1020,220,1295,333,'Williamsburg Brg',32,'h'],[870,325,1075,308,'E Broadway'],[1240,215,1262,60,'FDR Dr S',32,'h'],
  [1135,65,1160,50,'A'],[530,600,637,505,'Water St'],[770,525,925,690,'Brooklyn Brg',32,'h'],[935,487,1255,390,'Pier-11-East-34th St',32,'w'],[185,195,215,40,'Pier 11-H',30,'w'],[178,550,203,305,'NEW JERSEY',32,'j'],[308,145,296,560,'Battery Park-Christopher',28,'w'],
  [470,838,595,838,'Pier 11-',30,'w'],[597,828,670,745,'Paulus',28,'w'],[665,730,640,615,'Hook',28,'w'],[-5,960,100,840,'tatue of L',30,'w'],[100,835,262,700,'iberty-NY Fry',30,'w'],[-10,790,10,755,'Fry',26,'w'],
  [475,910,625,1210,'Hugh L Carey Tunn',32,'h'],[675,1210,765,830,'Brooklyn Queens Expy',32,'h'],[790,1020,828,875,'Henry St'],[790,1130,842,965,'Clinton St'],[960,885,967,718,'Adams St',32,'h'],
  [1172,877,1355,885,'Myrtle Ave'],[1165,973,1380,982,'De Kalb Ave'],[1160,1050,1392,1020,'Lafayette Ave'],[1165,1095,1240,1225,'Flatbush',32,'h'],[165,1215,173,1120,'t Park',30,'w'],[285,1210,375,1145,'Belford',30,'w'],
  [372,560,405,635,'South',28,'h'],[399,724,445,724,'478',28,'s'],[778,722,815,722,'278',26,'s'],[-10,200,5,120,'reene']]},
 {o:[860,110], l:[
  [115,330,180,195,'Kent Ave'],[303,475,372,310,'Marcy Ave',32,'h'],[315,515,382,345,'Rodney St',32,'h'],[450,398,603,383,'Grand St',32,'h'],[425,425,443,605,'Union Ave'],[675,510,895,470,'Johnson Ave'],[715,648,920,555,'Flushing Ave'],[275,582,368,680,'Lee Ave',32,'h'],
  [635,108,690,65,'BQE',32,'h'],[1180,192,1330,142,'Grand Ave'],[1115,648,1220,505,'Himrod St'],[1253,500,1330,390,'Harman'],[945,675,1105,790,'Wilson Ave'],[1258,630,1335,685,'Cypr'],[775,790,905,895,'Broadway'],[888,820,1085,962,'Bushwick Ave',32,'h'],[1190,935,1300,780,'Cornelia St'],
  [95,840,140,1118,'Washington Ave'],[318,818,352,1030,'Bedford Ave',32,'h'],[403,868,440,1100,'Nostrand Ave',32,'h'],[843,940,885,1208,'Malcolm X Blvd'],[985,1035,1012,1210,'Ralph Ave'],[180,1212,270,1228,'Atlan',32,'h'],[1310,1060,1325,1030,'C'],[495,45,512,60,'d',30,'h']]}
];
const ink = {c:'#34322f',h:'#75564b',p:'#7d9068',w:'#8097b5',s:'#fff',j:'#8b8a86',n:'#77716a'};
let out = '';
for (const t of tiles) {
  out += `<g transform="translate(${t.o}) scale(.33333)">`;
  for (const [x,y,X,Y,s,z=32,k='n'] of t.l) {
    const a = Math.atan2(Y-y,X-x)*180/Math.PI, w = Math.hypot(X-x,Y-y);
    const halo = k==='s'||k==='h' ? ink[k] : k==='w'||k==='j' ? '#cfdff4' : '#f5f1da';
    const hw = k==='h' ? .5 : k==='s' ? 0 : 5;
    out += `<text transform="translate(${x} ${y}) rotate(${a.toFixed(1)})" textLength="${w.toFixed(0)}" font-size="${(z*1.12).toFixed(1)}" fill="${ink[k]}" stroke="${halo}" stroke-width="${hw}" paint-order="stroke" stroke-opacity=".7" font-weight="${k==='c'?700:400}">${s}</text>`;
  }
  out += '</g>';
}
document.getElementById('labels').innerHTML = out;
</script>
</body>
</html>
